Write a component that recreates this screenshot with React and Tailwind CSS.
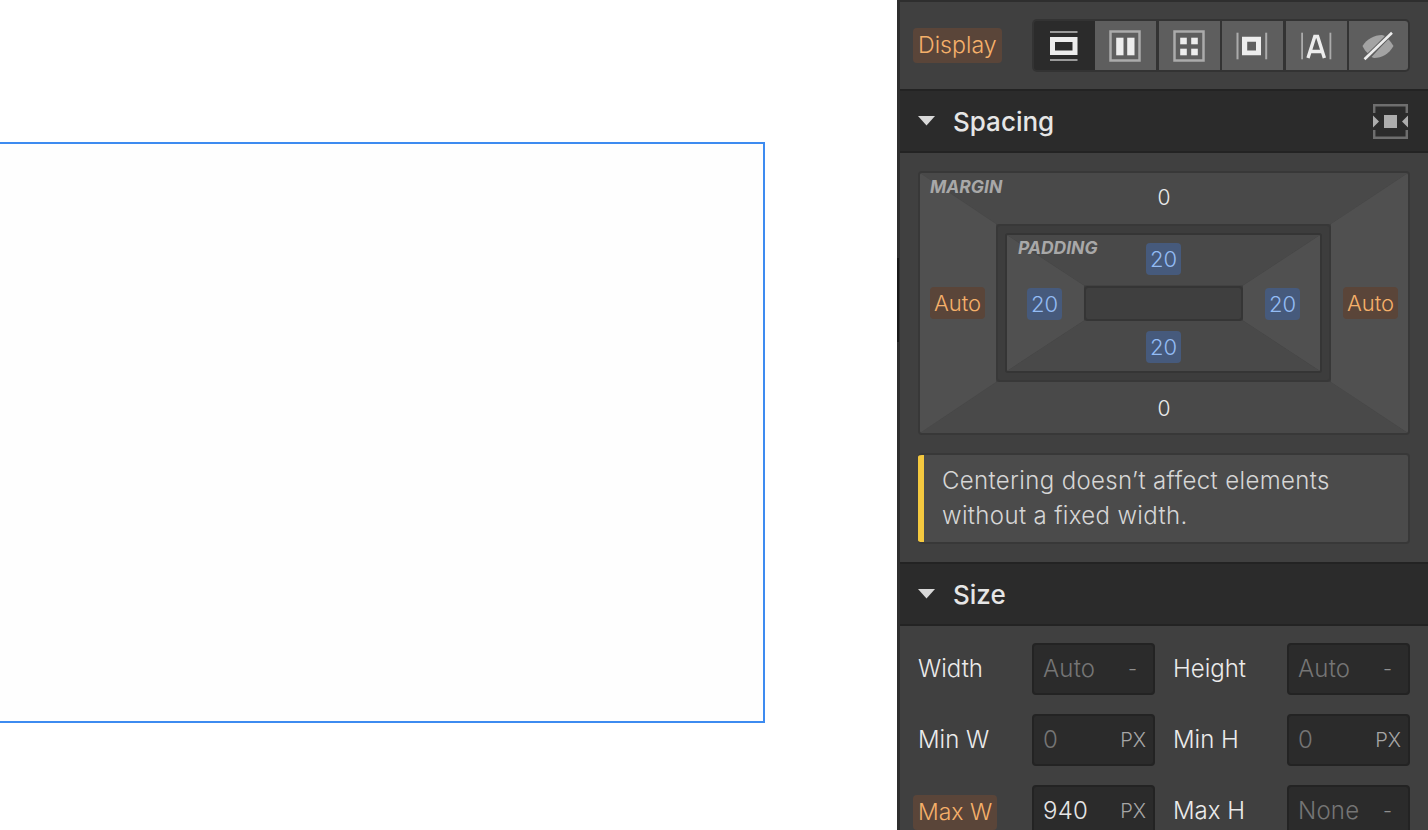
const F = "font-['Inter',sans-serif]";

function Seg({ w, bg = "bg-[#5e5e5e]", round = "", children }) {
  return (
    <div className={`flex items-center justify-center h-[49px] ${w} ${bg} ${round}`}>
      {children}
    </div>
  );
}

function Svg({ children }) {
  return <svg width={36} height={36} viewBox="0 0 36 36" fill="none">{children}</svg>;
}

function Header({ title, right }) {
  return (
    <div className="h-[64px] bg-[#2b2b2b] border-y-2 border-[#232323] flex items-center px-[18px] shrink-0">
      <svg width="17" height="10" viewBox="0 0 17 10" className="mr-[18px]"><polygon points="0,0 17,0 8.5,9.5" fill="#d9d9d9" /></svg>
      <span className="text-[26px] font-medium text-[#e6e6e6] leading-none pt-[2px]">{title}</span>
      <div className="ml-auto flex mr-[2px]">{right}</div>
    </div>
  );
}

function Badge({ kind, children, className = "" }) {
  const c = kind === "blue" ? "bg-[#465a7c] text-[#93bcf4]" : "bg-[#5a4539] text-[#f5b06a]";
  return <span className={`inline-flex items-center justify-center h-[32px] rounded-[4px] text-[22px] font-[350] leading-none ${c} ${className}`}>{children}</span>;
}

function Field({ label, value, unit, dim, hl }) {
  return (
    <div className="flex items-start">
      <div className="w-[114px] shrink-0 h-[52px] flex items-center">
        {hl ? (
          <span className="-ml-[5px] px-[5px] h-[35px] mt-[2px] flex items-center rounded-[4px] bg-[#5a4539] text-[#f5b06a] text-[23px] font-[350]">{label}</span>
        ) : (
          <span className="text-[24px] font-[350] text-[#ebebeb]">{label}</span>
        )}
      </div>
      <div className="w-[123px] h-[52px] shrink-0 bg-[#2b2b2b] border-2 border-[#232323] rounded-[4px] flex items-center pl-[9px] pr-[7px]">
        <span className={`text-[24px] font-[350] tracking-[0.2px] ${dim ? "text-[#757575]" : "text-[#e6e6e6]"}`}>{value}</span>
        <span className={`ml-auto text-[20px] font-[350] ${unit === "-" ? "text-[#8f8f8f] pr-[9px]" : "text-[#a6a6a6]"}`}>{unit}</span>
      </div>
    </div>
  );
}

function Shade({ top, left, right, bottom }) {
  return (
    <svg className="absolute inset-0 w-full h-full" viewBox="0 0 100 100" preserveAspectRatio="none">
      <polygon points={`0,0 100,0 ${right},${top} ${left},${top}`} fill="#494949" />
      <polygon points={`0,100 100,100 ${right},${bottom} ${left},${bottom}`} fill="#494949" />
      <polygon points={`0,0 ${left},${top} ${left},${bottom} 0,100`} fill="#505050" />
      <polygon points={`100,0 ${right},${top} ${right},${bottom} 100,100`} fill="#505050" />
    </svg>
  );
}

export default function App() {
  return (
    <div className={`flex w-[1428px] h-[830px] overflow-hidden bg-white ${F}`}>
      <div className="w-[897px] shrink-0 pt-[142px]">
        <div className="w-[765px] h-[581px] border-2 border-l-0 border-[#3d8bf0] bg-[#fefefe]" />
      </div>
      <div className="relative w-[531px] shrink-0 bg-[#404040] border-l-[3px] border-t-2 border-[#2e2e2e] flex flex-col">
        <div className="absolute -left-[3px] top-[256px] h-[84px] w-[2px] bg-[#1a1a1a]" />
        <div className="h-[87px] flex items-center pl-[13px] shrink-0">
          <span className="h-[35px] px-[5px] flex items-center rounded-[4px] bg-[#5a4539] text-[#f5b06a] text-[23.2px] font-[350]">Display</span>
          <div className="ml-[30px] w-[378px] flex bg-[#333333] p-[2px] rounded-[5px]">
            <Seg w="w-[61px]" bg="bg-[#2b2b2b]" round="rounded-l-[3px]">
              <Svg>
                <rect x="4" y="3" width="27.5" height="2" fill="#9a9a9a" />
                <path fillRule="evenodd" d="M4 9 H31.5 V27 H4 Z M9 14 V22.5 H26.5 V14 Z" fill="#ededed" />
                <rect x="4" y="31" width="27.5" height="2" fill="#9a9a9a" />
              </Svg>
            </Seg>
            <Seg w="w-[61px] mr-[3px]">
              <Svg>
                <rect x="3.5" y="3.5" width="29" height="29" stroke="#ababab" strokeWidth="2.5" />
                <rect x="9.2" y="9.7" width="7.3" height="17.6" fill="#ededed" />
                <rect x="20.2" y="9.7" width="7.3" height="17.6" fill="#ededed" />
              </Svg>
            </Seg>
            <Seg w="w-[61px] mr-[2.5px]">
              <Svg>
                <rect x="3.5" y="3.5" width="29" height="29" stroke="#ababab" strokeWidth="2.5" />
                <rect x="9.2" y="9.7" width="6.6" height="6.6" fill="#ededed" />
                <rect x="20.2" y="9.7" width="6.6" height="6.6" fill="#ededed" />
                <rect x="9.2" y="20.7" width="6.6" height="6.6" fill="#ededed" />
                <rect x="20.2" y="20.7" width="6.6" height="6.6" fill="#ededed" />
              </Svg>
            </Seg>
            <Seg w="w-[60.5px] mr-[3px]">
              <Svg>
                <rect x="2.5" y="4.7" width="2" height="26.6" fill="#ababab" />
                <rect x="31.2" y="4.7" width="2" height="26.6" fill="#ababab" />
                <path fillRule="evenodd" d="M8 8.7 H27 V27.3 H8 Z M13.2 13.7 V22.5 H22 V13.7 Z" fill="#ededed" />
              </Svg>
            </Seg>
            <Seg w="w-[61px] mr-[2px]">
              <Svg>
                <rect x="3.2" y="4.7" width="1.8" height="26.6" fill="#ababab" />
                <rect x="31.5" y="4.7" width="1.8" height="26.6" fill="#ababab" />
                <path d="M10 30 L16.8 8.5 H19.6 L26.4 30 M12.5 23.5 H24" stroke="#ededed" strokeWidth="3.4" />
              </Svg>
            </Seg>
            <Seg w="w-[59px]" round="rounded-r-[3px]">
              <Svg>
                <path d="M2.5 18 C7 11 14 7 22 7 L25 8 L8.5 26 C6 24 4 21 2.5 18 Z" fill="#a3a3a3" />
                <path d="M33.5 18 C29 26 22 30 14 30 L11.5 29 L28 11 C30 13 32 15.5 33.5 18 Z" fill="#a3a3a3" />
                <path d="M4.5 31.3 L32 4.7" stroke="#5e5e5e" strokeWidth="4.6" />
                <path d="M4.5 31.3 L32 4.7" stroke="#ededed" strokeWidth="2.6" />
              </Svg>
            </Seg>
          </div>
        </div>
        <Header
          title="Spacing"
          right={
            <svg width="35" height="35" viewBox="0 0 35 35">
              <path d="M1.2 9 V1.2 H33.8 V9 M1.2 26 V33.8 H33.8 V26" fill="none" stroke="#6e6e6e" strokeWidth="2.5" />
              <rect x="11" y="11" width="13" height="13" fill="#adadad" />
              <polygon points="0,11.5 6,17.5 0,23.5" fill="#adadad" />
              <polygon points="35,11.5 29,17.5 35,23.5" fill="#adadad" />
            </svg>
          }
        />
        <div className="pt-[18px] px-[18px] pb-[18px] flex flex-col gap-[18px] shrink-0">
          <div className="relative h-[264px] rounded-[4px] border-2 border-[#383838] overflow-hidden grid grid-rows-[51px_158px_1fr] grid-cols-[76px_335px_1fr]">
            <Shade left={15.6} right={84.2} top={19.6} bottom={80.4} />
            <span className="absolute left-[10px] top-[4px] text-[17.5px] font-bold italic text-[#a8a8a8] leading-[20px]">MARGIN</span>
            <div className="relative col-span-3 flex items-center justify-center pb-[1px]">
              <span className="text-[21px] font-[350] text-[#ebebeb]">0</span>
            </div>
            <div className="relative flex items-center pl-[10px]">
              <Badge kind="orange" className="w-[55px]">Auto</Badge>
            </div>
            <div className="relative bg-[#3d3d3d] border-2 border-[#383838] rounded-[4px] p-[7px]">
              <div className="relative h-full rounded-[3px] border-2 border-[#353535] grid grid-rows-[51px_35px_1fr] grid-cols-[77px_159px_1fr] overflow-hidden">
                <Shade left={24.6} right={75.4} top={37.2} bottom={62.8} />
                <span className="absolute left-[11px] top-[3px] text-[17.5px] font-bold italic text-[#a8a8a8] leading-[20px]">PADDING</span>
                <div className="relative col-span-3 flex justify-center pt-[8px]">
                  <Badge kind="blue" className="w-[35px]">20</Badge>
                </div>
                <div className="relative flex items-center justify-center pr-[2px]">
                  <Badge kind="blue" className="w-[35px]">20</Badge>
                </div>
                <div className="relative bg-[#3f3f3f] border-2 border-[#353535] rounded-[4px]" />
                <div className="relative flex items-center justify-center pl-[2px]">
                  <Badge kind="blue" className="w-[35px]">20</Badge>
                </div>
                <div className="relative col-span-3 flex justify-center pt-[10px]">
                  <Badge kind="blue" className="w-[35px]">20</Badge>
                </div>
              </div>
            </div>
            <div className="relative flex items-center justify-center pl-[2px]">
              <Badge kind="orange" className="w-[55px]">Auto</Badge>
            </div>
            <div className="relative col-span-3 flex items-center justify-center pt-[3px]">
              <span className="text-[21px] font-[350] text-[#ebebeb]">0</span>
            </div>
          </div>
          <div className="h-[91px] rounded-[4px] border-2 border-l-0 border-[#383838] bg-[#4b4b4b] flex overflow-hidden">
            <div className="w-[6px] bg-[#f5c93f] shrink-0" />
            <p className="pl-[18px] pt-[8px] text-[24px] font-[350] leading-[35px] text-[#d6d6d6] tracking-[0.35px]">
              Centering doesn’t affect elements<br />without a fixed width.
            </p>
          </div>
        </div>
        <Header title="Size" />
        <div className="pt-[17px] px-[18px] grid grid-cols-[237px_237px] gap-x-[18px] gap-y-[19px]">
          <Field label="Width" value="Auto" unit="-" dim />
          <Field label="Height" value="Auto" unit="-" dim />
          <Field label="Min W" value="0" unit="PX" dim />
          <Field label="Min H" value="0" unit="PX" dim />
          <Field label="Max W" value="940" unit="PX" hl />
          <Field label="Max H" value="None" unit="-" dim />
        </div>
      </div>
    </div>
  );
}
